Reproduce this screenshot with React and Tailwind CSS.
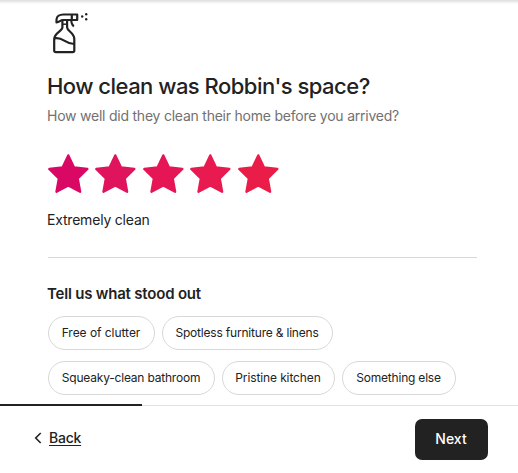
import { useState } from 'react';

const tagRows = [
  [
    { label: 'Free of clutter', width: 'w-[107px]', tracking: 'tracking-[-0.04px]' },
    { label: 'Spotless furniture & linens', width: 'w-[171px]', tracking: 'tracking-[-0.2px]' },
  ],
  [
    { label: 'Squeaky-clean bathroom', width: 'w-[167px]', tracking: 'tracking-[-0.2px]' },
    { label: 'Pristine kitchen', width: 'w-[113px]', tracking: 'tracking-[-0.12px]' },
    { label: 'Something else', width: 'w-[114px]', tracking: 'tracking-[-0.2px]' },
  ],
];

const starColors = ['#da0865', '#e0145c', '#e61656', '#e81a50', '#ea1d48'];

function SprayIcon() {
  return (
    <svg className="block h-[42px] w-10" viewBox="0 0 40 42" fill="none" stroke="#222" strokeWidth="2.2" strokeLinejoin="round">
      <path d="M25.200 2.500H11.500C7.300 2.500 4.500 4.700 4.500 7.800v2.600c3.300 0 3.500-2.400 6.500-2.400h14.200z" />
      <path d="M19.800 2.400v5.600" />
      <path d="M10.400 8.200v7.300c0 3.500-8.200 5.300-8.200 11.500v11.500c0 1 .7 1.700 1.700 1.700h16.700c1 0 1.700-.7 1.700-1.700V27c0-6.200-7.200-8-7.200-11.500V8.200" />
      <path d="M10 12.200h5" strokeWidth="1.500" />
      <path d="M2.300 26.400c9.200-2 9.700 5.600 20 5.600" />
      <path d="M19.200 8c0 3 .600 4.600 2.600 6.500" strokeWidth="2" />
      <g fill="#222" stroke="none">
        <circle cx="30.200" cy="4.500" r="1.200" />
        <circle cx="34.200" cy="2.300" r="1.200" />
        <circle cx="34.200" cy="7.300" r="1.200" />
      </g>
    </svg>
  );
}

function Star({ color, onClick, label }) {
  return (
    <button type="button" aria-label={label} onClick={onClick} className="h-10 w-[41px]">
      <svg className="block h-10 w-[41px]" viewBox="0 0 41 40" fill={color} stroke={color} strokeWidth="2.4" strokeLinejoin="round">
        <path d="M20.300 1.400 26 13.500 39.300 15 29.700 24.500 32.100 37.700 20.300 31.500 8.500 37.700 10.900 24.500 1.300 15 14.600 13.500Z" />
      </svg>
    </button>
  );
}

export default function App() {
  const [rating, setRating] = useState(5);
  const [selected, setSelected] = useState([]);

  const toggleTag = (label) => {
    setSelected(selected.includes(label) ? selected.filter((t) => t !== label) : [...selected, label]);
  };

  return (
    <div className="flex h-screen flex-col overflow-hidden bg-white font-['Inter','Liberation_Sans',sans-serif] text-[#222]">
      <div className="h-1 shrink-0 bg-linear-to-b from-[#dedede] to-white" />
      <main className="min-h-0 flex-1 overflow-hidden pr-[41px] pl-12">
        <div className="pt-2 pl-1">
          <SprayIcon />
        </div>
        <h1 className="mt-[17px] -ml-px text-[22px] leading-[30px] font-medium tracking-[-0.52px] whitespace-nowrap">How clean was Robbin's space?</h1>
        <p className="mt-[5px] -ml-px text-sm leading-5 tracking-[-0.23px] whitespace-nowrap text-[#717171]">How well did they clean their home before you arrived?</p>

        <div className="mt-7 flex gap-[6.4px]">
          {starColors.map((color, i) => (
            <Star key={color} color={i < rating ? color : '#dddddd'} label={`${i + 1} stars`} onClick={() => setRating(i + 1)} />
          ))}
        </div>
        <p className="mt-4 -ml-px text-sm leading-5 tracking-[-0.2px] whitespace-nowrap">Extremely clean</p>

        <hr className="mt-[27px] border-t border-[#d8d8d8]" />

        <h2 className="mt-[26px] -ml-px text-[15px] leading-5 font-semibold tracking-[-0.2px] whitespace-nowrap">Tell us what stood out</h2>
        <div className="mt-3 flex flex-col gap-[11px]">
          {tagRows.map((row, i) => (
            <div key={i} className="flex gap-[7px]">
              {row.map((tag) => (
                <button
                  key={tag.label}
                  type="button"
                  onClick={() => toggleTag(tag.label)}
                  className={`h-[34px] shrink-0 rounded-full border pr-px text-xs whitespace-nowrap ${tag.width} ${tag.tracking} ${selected.includes(tag.label) ? 'border-[#222]' : 'border-[#d8d8d8]'}`}
                >
                  {tag.label}
                </button>
              ))}
            </div>
          ))}
        </div>
      </main>

      <footer className="h-[69px] shrink-0">
        {/* Progress through the review steps */}
        <div className="flex h-0.5 items-center">
          <div className="h-0.5 w-[142px] bg-[#222]" />
          <div className="h-px flex-1 bg-[#e2e2e2]" />
        </div>
        <div className="flex items-start justify-between pt-[13px] pr-[30px] pl-[34px]">
          <button type="button" className="mt-[9px] flex items-center gap-[7px] text-sm leading-5 font-medium tracking-[-0.25px]">
            <svg className="h-3 w-2" viewBox="0 0 8 12" fill="none" stroke="#222" strokeWidth="1.600">
              <path d="M6.700 1 1.700 6l5 5" />
            </svg>
            <span className="underline underline-offset-2">Back</span>
          </button>
          <button type="button" className="h-[41px] w-[73px] rounded-[7px] bg-[#222] pr-px pb-0.5 text-sm font-medium text-white">Next</button>
        </div>
      </footer>
    </div>
  );
}
